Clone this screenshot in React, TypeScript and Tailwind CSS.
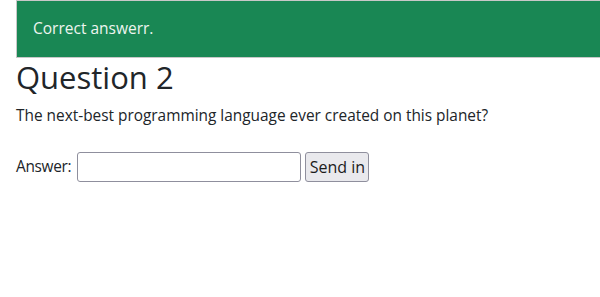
import React from "react";

export default function App() {
  return (
    <div className="min-h-[297px] bg-white font-['Open_Sans',sans-serif] text-[#212529]">
      <div className="ml-4 w-[600px] h-[58px] border border-[#c8c8c8] bg-[#198754] flex items-center pl-4">
        <span className="text-[15.5px] text-[#eef5f0]">Correct answerr.</span>
      </div>
      <h2 className="mx-4 text-[31px] leading-[38px] font-normal">Question 2</h2>
      <p className="mx-4 mt-2 text-[15.4px] leading-6">
        The next-best programming language ever created on this planet?
      </p>
      <form className="mx-4 mt-[24px] flex items-center" onSubmit={(e) => e.preventDefault()}>
        <label className="text-[15.4px] tracking-[-0.3px] mr-[6px]">Answer:</label>
        <input
          type="text"
          className="box-border w-[224px] h-[30px] border border-[#8f8f9d] rounded-[3px] bg-white px-1"
        />
        <button
          type="submit"
          className="box-border ml-1 w-16 h-[30px] border border-[#8f8f9d] rounded-[3px] bg-[#e9e9ed] text-[16px] text-[#1b1b1b]"
        >
          Send in
        </button>
      </form>
    </div>
  );
}
